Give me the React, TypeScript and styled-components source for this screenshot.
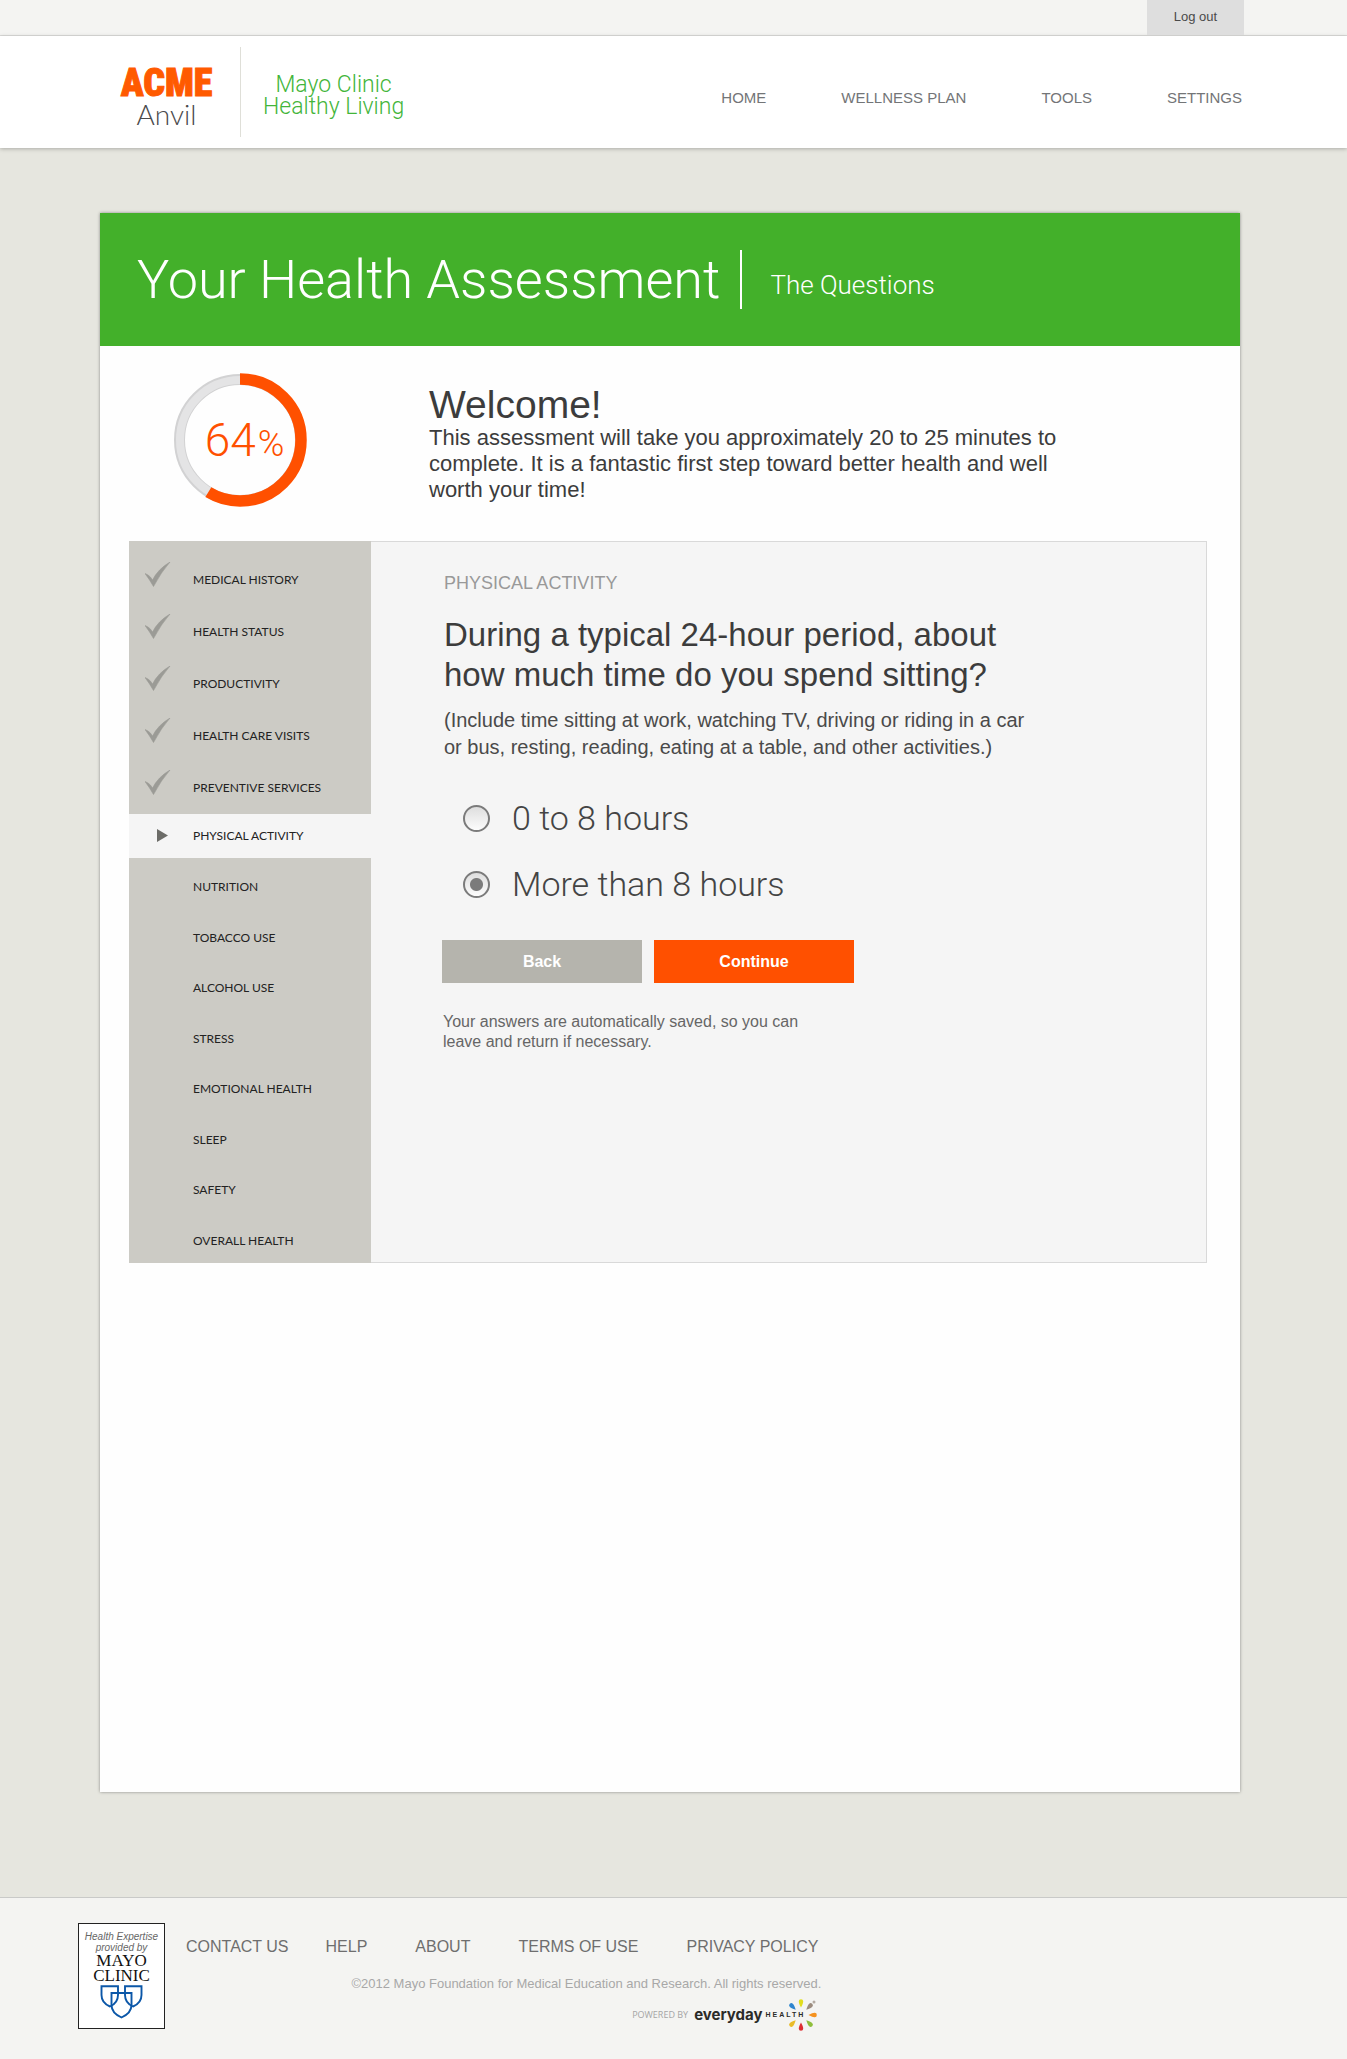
import React from "react";
import styled, { createGlobalStyle, css } from "styled-components";

const sans = `"Liberation Sans", Arial, Helvetica, sans-serif`;
const light = `Roboto, "Liberation Sans", sans-serif`;
const humanist = `Lato, "Open Sans", sans-serif`;

const GlobalStyle = createGlobalStyle`
  *, *::before, *::after { box-sizing: border-box; }
  body { margin: 0; background: #e6e6df; font-family: ${sans}; color: #3c3c3c; }
  h1, h2, p, ul { margin: 0; padding: 0; font-weight: 400; }
  ul { list-style: none; }
  a { color: inherit; text-decoration: none; }
`;

const TopBar = styled.div`
  display: flex;
  justify-content: flex-end;
  padding-right: 103px;
  background: #f4f4f2;
  border-bottom: 1px solid #dcdcda;
`;

const LogOut = styled.button`
  width: 97px;
  height: 35px;
  padding: 0 0 2px;
  border: 0;
  background: #dedede;
  color: #4a4a4a;
  font: 13px ${sans};
  cursor: pointer;
`;

const Header = styled.header`
  display: flex;
  align-items: center;
  height: 112px;
  padding: 0 105px 0 122px;
  background: #fff;
  box-shadow: 0 1px 4px rgba(0, 0, 0, 0.25);
`;

const Brand = styled.a`
  display: flex;
  flex-direction: column;
  align-items: center;
  width: 89px;
  padding-top: 10px;
`;

const BrandName = styled.span`
  color: #ff5a00;
  font: 900 38px/34px "Roboto Condensed", Impact, sans-serif;
  -webkit-text-stroke: 1px #ff5a00;
`;

const BrandSub = styled.span`
  color: #4a4a4c;
  font: 300 28px/28px ${humanist};
`;

const Partner = styled.div`
  display: flex;
  align-items: center;
  height: 90px;
  margin-left: 29px;
  padding: 8px 0 0 22px;
  border-left: 1px solid #dfdfd8;
  color: #43b53a;
  font: 300 23px/22px ${light};
  text-align: center;
`;

const MainNav = styled.nav`
  display: flex;
  gap: 75px;
  margin-left: auto;
  padding-top: 11px;
  color: #737577;
  font-size: 15px;
`;

const Card = styled.main`
  min-height: 1579px;
  margin: 65px 107px 105px 100px;
  background: #fefefe;
  box-shadow: 0 0 3px rgba(0, 0, 0, 0.4);
`;

const TitleBar = styled.div`
  display: flex;
  align-items: center;
  height: 133px;
  padding-left: 37px;
  background: #43b02a;
  color: #fff;
  font-family: ${light};
  font-weight: 300;
`;

const Title = styled.h1`
  font-weight: 300;
  font-size: 54px;
  line-height: 64px;
`;

const Subtitle = styled.p`
  height: 59px;
  margin-left: 20px;
  padding: 20px 0 0 28px;
  border-left: 2px solid #fff;
  font-weight: 300;
  font-size: 26px;
  line-height: 30px;
`;

const Intro = styled.section`
  display: flex;
  gap: 122px;
  padding: 27px 150px 0 73px;
`;

const Progress = styled.div`
  display: grid;
  place-items: center;
  width: 134px;
  height: 134px;
  flex: none;

  > * { grid-area: 1 / 1; }
`;

const Percent = styled.span`
  padding: 4px 0 0 9px;
  color: #ff5000;
  font: 300 46px/48px ${light};

  small { font-size: 36px; margin-left: 2px; }
`;

const Welcome = styled.div`
  padding-top: 12px;
  max-width: 640px;
`;

const WelcomeTitle = styled.h2`
  font-size: 39px;
  line-height: 40px;
`;

const WelcomeText = styled.p`
  font-size: 22px;
  line-height: 26px;
`;

const Workspace = styled.section`
  display: flex;
  min-height: 722px;
  margin: 34px 33px 0 29px;
`;

const Sidebar = styled.nav`
  display: flex;
  flex-direction: column;
  width: 242px;
  flex: none;
  padding-top: 13px;
  background: #cccbc5;
  color: #222;
  font: 12px/20px ${humanist};
`;

const Steps = styled.ul<{ $fill?: boolean }>`
  display: flex;
  flex-direction: column;
  ${(p) => p.$fill && css`flex: 1; justify-content: space-between; padding-top: 7px;`}
`;

const Step = styled.li<{ $state: "done" | "current" | "next" }>`
  > a {
    display: grid;
    grid-template-columns: 64px 1fr;
    align-items: center;
    height: ${(p) => (p.$state === "done" ? 52 : 44)}px;
    background: ${(p) => (p.$state === "current" ? "#f5f5f5" : "transparent")};
  }
`;

const Mark = styled.span<{ $raised?: boolean }>`
  display: flex;
  padding-left: ${(p) => (p.$raised ? 16 : 28)}px;
  padding-bottom: ${(p) => (p.$raised ? 12 : 2)}px;
`;

const Panel = styled.div`
  flex: 1;
  padding: 30px 120px 40px 71px;
  border: 1px solid #d9d9d9;
  border-left: 0;
  background: #f5f5f5;
`;

const Category = styled.p`
  padding-left: 2px;
  color: #999;
  font-size: 18px;
  line-height: 22px;
`;

const Question = styled.h2`
  max-width: 580px;
  padding: 21px 0 0 2px;
  font-size: 33px;
  line-height: 40px;
`;

const Hint = styled.p`
  max-width: 596px;
  padding: 12px 0 0 2px;
  color: #4a4a4a;
  font-size: 20px;
  line-height: 27px;
`;

const Options = styled.div`
  display: flex;
  flex-direction: column;
  gap: 26px;
  padding: 37px 0 0 21px;
`;

const Option = styled.label`
  display: flex;
  align-items: center;
  gap: 22px;
  color: #444;
  font: 300 34px/40px ${light};
`;

const Radio = styled.input`
  appearance: none;
  width: 27px;
  height: 27px;
  margin: 0;
  border: 2px solid #7b7b7b;
  border-radius: 50%;
  background: linear-gradient(#dedede, #fcfcfc);

  &:checked {
    background: radial-gradient(circle, #7b7b7b 6px, transparent 7px), linear-gradient(#dedede, #fcfcfc);
  }
`;

const Actions = styled.div`
  display: flex;
  gap: 12px;
  padding-top: 36px;
`;

const Button = styled.button<{ $primary?: boolean }>`
  width: 200px;
  height: 43px;
  padding: 0;
  border: 0;
  background: ${(p) => (p.$primary ? "#ff5000" : "#b5b4ad")};
  color: #fff;
  font: bold 16px ${sans};
  cursor: pointer;
`;

const Note = styled.p`
  max-width: 370px;
  padding: 29px 0 0 1px;
  color: #666;
  font-size: 16px;
  line-height: 20px;
`;

const Footer = styled.footer`
  display: flex;
  gap: 21px;
  height: 162px;
  padding: 25px 78px 0;
  border-top: 1px solid #c9cac8;
  background: #f4f4f2;
`;

const Badge = styled.div`
  display: flex;
  flex-direction: column;
  align-items: center;
  width: 87px;
  height: 106px;
  padding-top: 7px;
  border: 1px solid #222;
  background: #fff;
`;

const BadgeCaption = styled.span`
  color: #666;
  font: italic 10px/11px ${sans};
  text-align: center;
`;

const BadgeName = styled.span`
  margin-bottom: 2px;
  color: #111;
  font: 17px/15px "Liberation Serif", "Times New Roman", serif;
  text-align: center;
`;

const FooterBody = styled.div`
  display: flex;
  flex-direction: column;
  align-items: flex-end;
  padding-top: 14px;
`;

const FooterNav = styled.nav`
  display: flex;
  padding-right: 3px;
  color: #6e6e6e;
  font-size: 16px;
  line-height: 20px;
`;

const FooterLink = styled.a<{ $near?: boolean }>`
  margin-left: ${(p) => (p.$near ? 37 : 48)}px;

  &:first-child { margin-left: 0; }
`;

const Copyright = styled.p`
  padding-top: 18px;
  color: #a8a8a8;
  font-size: 13px;
  line-height: 18px;
`;

const Powered = styled.div`
  display: flex;
  align-items: center;
  padding: 6px 4px 0 0;
`;

const PoweredBy = styled.span`
  margin-right: 6px;
  color: #a5a5a5;
  font: 9px/16px "Open Sans", sans-serif;
`;

const Everyday = styled.span`
  color: #2b2b28;
  font: bold 15px/20px Inter, sans-serif;
`;

const Health = styled.span`
  margin-left: 3px;
  color: #2b2b28;
  font: bold 7px/16px ${sans};
  letter-spacing: 2px;
`;

const BurstIcon = styled.svg`
  margin-left: -20px;
`;

const Check = () => (
  <svg width="26" height="25" viewBox="0 0 26 25" fill="#9b9b96" aria-hidden="true">
    <path d="M0 11.500 3 13Q5.500 14.500 7.500 18Q13 7 25 0Q16.500 9.500 8.500 24.500Q4.500 17.500 0 11.500Z" stroke="#9b9b96" strokeWidth="0.600" />
  </svg>
);

const Arrow = () => (
  <svg width="12" height="13" viewBox="0 0 12 13" fill="#6c6c68" aria-hidden="true">
    <path d="M0 0 11 6.500 0 13Z" />
  </svg>
);

const Ring = () => {
  const r = 61;
  const around = 2 * Math.PI * r;
  return (
    <svg width="134" height="134" viewBox="0 0 134 134" fill="none" aria-hidden="true">
      <circle cx="67" cy="67" r="60.500" stroke="#d2d2d3" strokeWidth="11" />
      <circle cx="67" cy="67" r="60" stroke="#e4e4e5" strokeWidth="8" />
      <circle
        cx="67"
        cy="67"
        r={r}
        stroke="#ff5000"
        strokeWidth="11.500"
        strokeDasharray={`${around * 0.586} ${around}`}
        transform="rotate(-90 67 67)"
      />
    </svg>
  );
};

const Shields = () => (
  <svg width="43" height="34" viewBox="0 0 43 34" fill="none" stroke="#0b57a8" strokeWidth="1.900" aria-hidden="true">
    <path d="M1.500 1.200H18V10Q18 18 10 21.500Q1.500 18 1.500 10Z" />
    <path d="M25 1.200H41.500V10Q41.500 18 33 21.500Q25 18 25 10Z" />
    <path d="M11.500 8H31.500V20Q31.500 28 21.500 32.500Q11.500 28 11.500 20Z" />
  </svg>
);

const petals: [number, string][] = [
  [0, "#e2dd1c"],
  [45, "#9b8b7e"],
  [90, "#f5921f"],
  [135, "#8fbe3c"],
  [180, "#dd2f33"],
  [225, "#e9bb27"],
  [315, "#2f86cf"],
];

const Burst = () => (
  <BurstIcon width="32" height="32" viewBox="-16 -16 32 32" aria-hidden="true">
    {petals.map(([angle, color]) => (
      <path key={angle} d="M0 -7.500Q-2.400 -12 -2.200 -13.800A2.200 2 0 0 1 2.200 -13.800Q2.400 -12 0 -7.500Z" fill={color} transform={`rotate(${angle})`} />
    ))}
    <circle cx="13" cy="-13" r="1.500" fill="#b3aaa2" />
  </BurstIcon>
);

const done = ["MEDICAL HISTORY", "HEALTH STATUS", "PRODUCTIVITY", "HEALTH CARE VISITS", "PREVENTIVE SERVICES"];
const upcoming = ["NUTRITION", "TOBACCO USE", "ALCOHOL USE", "STRESS", "EMOTIONAL HEALTH", "SLEEP", "SAFETY", "OVERALL HEALTH"];
const answers = ["0 to 8 hours", "More than 8 hours"];

export default function App() {
  const [answer, setAnswer] = React.useState(answers[1]);

  return (
    <>
      <GlobalStyle />
      <TopBar>
        <LogOut type="button">Log out</LogOut>
      </TopBar>
      <Header>
        <Brand href="#">
          <BrandName>ACME</BrandName>
          <BrandSub>Anvil</BrandSub>
        </Brand>
        <Partner>
          <span>
            Mayo Clinic
            <br />
            Healthy Living
          </span>
        </Partner>
        <MainNav aria-label="Main">
          {["HOME", "WELLNESS PLAN", "TOOLS", "SETTINGS"].map((item) => (
            <a key={item} href="#">{item}</a>
          ))}
        </MainNav>
      </Header>

      <Card>
        <TitleBar>
          <Title>Your Health Assessment</Title>
          <Subtitle>The Questions</Subtitle>
        </TitleBar>
        <Intro>
          <Progress>
            <Ring />
            <Percent>64<small>%</small></Percent>
          </Progress>
          <Welcome>
            <WelcomeTitle>Welcome!</WelcomeTitle>
            <WelcomeText>
              This assessment will take you approximately 20 to 25 minutes to complete. It is a fantastic first step
              toward better health and well worth your time!
            </WelcomeText>
          </Welcome>
        </Intro>

        <Workspace>
          <Sidebar aria-label="Sections">
            <Steps>
              {done.map((name) => (
                <Step key={name} $state="done">
                  <a href="#"><Mark $raised><Check /></Mark>{name}</a>
                </Step>
              ))}
              <Step $state="current">
                <a href="#" aria-current="step"><Mark><Arrow /></Mark>PHYSICAL ACTIVITY</a>
              </Step>
            </Steps>
            <Steps $fill>
              {upcoming.map((name) => (
                <Step key={name} $state="next">
                  <a href="#"><Mark />{name}</a>
                </Step>
              ))}
            </Steps>
          </Sidebar>

          <Panel>
            <Category>PHYSICAL ACTIVITY</Category>
            <Question id="question">During a typical 24-hour period, about how much time do you spend sitting?</Question>
            <Hint>
              (Include time sitting at work, watching TV, driving or riding in a car or bus, resting, reading, eating
              at a table, and other activities.)
            </Hint>
            <Options role="radiogroup" aria-labelledby="question">
              {answers.map((text) => (
                <Option key={text}>
                  <Radio type="radio" name="sitting" checked={answer === text} onChange={() => setAnswer(text)} />
                  {text}
                </Option>
              ))}
            </Options>
            <Actions>
              <Button type="button">Back</Button>
              <Button type="button" $primary>Continue</Button>
            </Actions>
            <Note>Your answers are automatically saved, so you can leave and return if necessary.</Note>
          </Panel>
        </Workspace>
      </Card>

      <Footer>
        <Badge>
          <BadgeCaption>Health Expertise<br />provided by</BadgeCaption>
          <BadgeName>MAYO<br />CLINIC</BadgeName>
          <Shields />
        </Badge>
        <FooterBody>
          <FooterNav aria-label="Footer">
            <FooterLink href="#">CONTACT US</FooterLink>
            <FooterLink href="#" $near>HELP</FooterLink>
            <FooterLink href="#">ABOUT</FooterLink>
            <FooterLink href="#">TERMS OF USE</FooterLink>
            <FooterLink href="#">PRIVACY POLICY</FooterLink>
          </FooterNav>
          <Copyright>©2012 Mayo Foundation for Medical Education and Research. All rights reserved.</Copyright>
          <Powered>
            <PoweredBy>POWERED BY</PoweredBy>
            <Everyday>everyday</Everyday>
            <Health>HEALTH</Health>
            <Burst />
          </Powered>
        </FooterBody>
      </Footer>
    </>
  );
}
